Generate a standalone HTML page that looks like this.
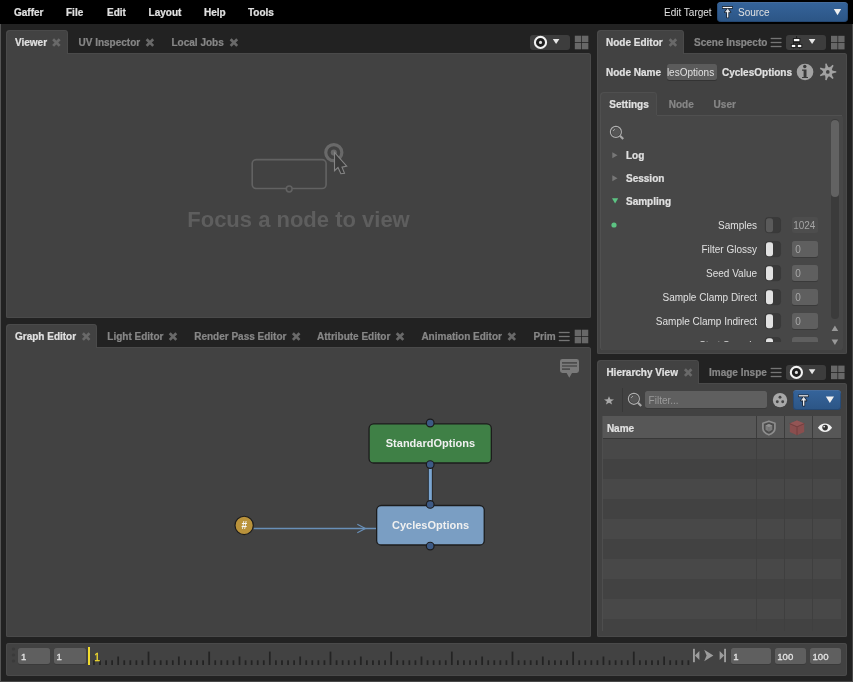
<!DOCTYPE html>
<html><head><meta charset="utf-8"><title>Gaffer</title>
<style>
html,body{margin:0;padding:0}
body{width:853px;height:682px;background:#222222;overflow:hidden;position:relative;font-family:"Liberation Sans",sans-serif;font-size:10px;line-height:12px;color:#e0e0e0}
.a{position:absolute;display:block}
.t{position:absolute;white-space:nowrap;line-height:12px;font-size:10px}
.b{font-weight:bold;-webkit-text-stroke:0.22px}
.f{color:#878787}
#w{position:absolute;left:0;top:0;width:853px;height:682px;will-change:transform}
</style></head><body><div id="w">
<div class="a" style="left:0px;top:24px;width:1px;height:658px;background:#555555;"></div>
<div class="a" style="left:852px;top:24px;width:1px;height:658px;background:#484848;"></div>
<div class="a" style="left:0px;top:681px;width:853px;height:1px;background:#484848;"></div>
<div class="a" style="left:0px;top:0px;width:853px;height:24px;background:#000000;"></div>
<div class="t b" style="left:14px;top:6.53px;">Gaffer</div>
<div class="t b" style="left:66px;top:6.53px;">File</div>
<div class="t b" style="left:107px;top:6.53px;">Edit</div>
<div class="t b" style="left:148.6px;top:6.53px;">Layout</div>
<div class="t b" style="left:204px;top:6.53px;">Help</div>
<div class="t b" style="left:248px;top:6.53px;">Tools</div>
<div class="t " style="left:664px;top:6.53px;">Edit Target</div>
<div class="a" style="left:717px;top:2px;width:131px;height:20px;border-radius:4px;background:linear-gradient(#35649b,#2c5585);box-shadow:inset 0 1px 0 rgba(120,160,210,.35),inset 0 0 0 1px rgba(20,40,70,.3)"></div>
<svg class="a" style="left:722px;top:6px" width="13" height="14" viewBox="0 0 13 14"><g stroke="#18222f" stroke-width="1.6" stroke-linejoin="round" fill="#18222f"><path d="M0.7 0.9H10.2V2.1H0.7Z"/><path d="M5.7 2.4L8.5 6.3H2.9Z"/><path d="M5.05 5H6.35V11.5H5.05Z"/></g><g fill="#d4dae2"><path d="M5.7 2.4L8.5 6.3H2.9Z"/></g><g fill="#f6f7f9"><path d="M0.7 0.9H10.2V2.1H0.7Z"/><path d="M5.05 5H6.35V11.5H5.05Z"/></g></svg>
<div class="t " style="left:738px;top:6.53px;">Source</div>
<svg class="a" style="left:833px;top:9px" width="10" height="8" viewBox="0 0 10 8"><g transform="translate(0.8,0)"><path d="M0 0H7.4L3.7 6.2Z" fill="#f0f0f0"/></g></svg>
<div class="a" style="left:6px;top:53px;width:585px;height:265px;background:#424242;border-radius:0 3px 2.5px 2.5px;box-shadow:inset 1px 0 0 #4a4a4a,inset -1px 0 0 #4a4a4a,inset 0 -1px 0 #4a4a4a"></div>
<div class="a" style="left:68px;top:53px;width:521px;height:1px;background:#4a4a4a;"></div>
<div class="a" style="left:6px;top:30px;width:62px;height:24px;background:#424242;border-radius:4px 4px 0 0;box-shadow:inset 1px 1px 0 #4a4a4a,inset -1px 0 0 #4a4a4a"></div>
<div class="a" style="left:6px;top:347px;width:585px;height:290px;background:#424242;border-radius:0 3px 2.5px 2.5px;box-shadow:inset 1px 0 0 #4a4a4a,inset -1px 0 0 #4a4a4a,inset 0 -1px 0 #4a4a4a"></div>
<div class="a" style="left:97px;top:347px;width:492px;height:1px;background:#4a4a4a;"></div>
<div class="a" style="left:6px;top:324px;width:91px;height:24px;background:#424242;border-radius:4px 4px 0 0;box-shadow:inset 1px 1px 0 #4a4a4a,inset -1px 0 0 #4a4a4a"></div>
<div class="a" style="left:597px;top:53px;width:250px;height:301px;background:#424242;border-radius:0 3px 2.5px 2.5px;box-shadow:inset 1px 0 0 #4a4a4a,inset -1px 0 0 #4a4a4a,inset 0 -1px 0 #4a4a4a"></div>
<div class="a" style="left:684px;top:53px;width:161px;height:1px;background:#4a4a4a;"></div>
<div class="a" style="left:597px;top:30px;width:87px;height:24px;background:#424242;border-radius:4px 4px 0 0;box-shadow:inset 1px 1px 0 #4a4a4a,inset -1px 0 0 #4a4a4a"></div>
<div class="a" style="left:597px;top:383px;width:250px;height:254px;background:#424242;border-radius:0 3px 2.5px 2.5px;box-shadow:inset 1px 0 0 #4a4a4a,inset -1px 0 0 #4a4a4a,inset 0 -1px 0 #4a4a4a"></div>
<div class="a" style="left:699px;top:383px;width:146px;height:1px;background:#4a4a4a;"></div>
<div class="a" style="left:597px;top:360px;width:102px;height:24px;background:#424242;border-radius:4px 4px 0 0;box-shadow:inset 1px 1px 0 #4a4a4a,inset -1px 0 0 #4a4a4a"></div>
<div class="a" style="left:6px;top:643px;width:841px;height:33px;background:#424242;border-radius:3px;box-shadow:inset 0 0 0 1px #4a4a4a"></div>
<div class="t b" style="left:15px;top:36.53px;">Viewer</div>
<svg class="a" style="left:52px;top:38px" width="10" height="11" viewBox="0 0 10 11"><g transform="translate(0,0.2)"><path d="M1.1 1.1L7.7 7.7M7.7 1.1L1.1 7.7" stroke="#696969" stroke-width="2.7" fill="none"/></g></svg>
<div class="t b f" style="left:78.5px;top:36.53px;">UV Inspector</div>
<svg class="a" style="left:145px;top:38px" width="11" height="11" viewBox="0 0 11 11"><g transform="translate(0.5,0.2)"><path d="M1.1 1.1L7.7 7.7M7.7 1.1L1.1 7.7" stroke="#696969" stroke-width="2.7" fill="none"/></g></svg>
<div class="t b f" style="left:171.5px;top:36.53px;">Local Jobs</div>
<svg class="a" style="left:229px;top:38px" width="11" height="11" viewBox="0 0 11 11"><g transform="translate(0.5,0.2)"><path d="M1.1 1.1L7.7 7.7M7.7 1.1L1.1 7.7" stroke="#696969" stroke-width="2.7" fill="none"/></g></svg>
<div class="a" style="left:530px;top:35px;width:40px;height:15px;background:#3d3d3d;border-radius:3px"></div>
<svg class="a" style="left:532px;top:34px" width="18" height="18" viewBox="0 0 18 18"><g transform="translate(0.5,0.4)"><circle cx="8" cy="8" r="5.55" fill="#1e1e1e" stroke="#f2f2f2" stroke-width="2.1"/><circle cx="8" cy="8" r="1.55" fill="#e0e0e0"/></g></svg>
<svg class="a" style="left:552px;top:39px" width="9" height="6" viewBox="0 0 9 6"><g transform="translate(0.8,0)"><path d="M0 0H6.6L3.3 5Z" fill="#e6e6e6"/></g></svg>
<svg class="a" style="left:574px;top:35px" width="16" height="16" viewBox="0 0 16 16"><g transform="translate(0.8,0.7)"><rect x="0" y="0" width="6.45" height="6.45" fill="#676767"/><rect x="7.2" y="0" width="6.35" height="6.45" fill="#676767"/><rect x="0" y="7.2" width="6.45" height="6.4" fill="#676767"/><rect x="7.2" y="7.2" width="6.35" height="6.4" fill="#676767"/></g></svg>
<svg class="a" style="left:240px;top:135px" width="121" height="66" viewBox="0 0 121 66"><rect x="12.2" y="24.6" width="73.9" height="28.9" rx="4" fill="none" stroke="#626262" stroke-width="1.65"/><circle cx="49.2" cy="54" r="2.9" fill="#424242" stroke="#626262" stroke-width="1.5"/><circle cx="93.8" cy="17.6" r="8.05" fill="none" stroke="#696969" stroke-width="3.2"/><circle cx="93.8" cy="17.6" r="3.05" fill="#696969"/><path d="M94.5 17.4V35.7L98 32.5L100.9 38.7L104.5 38.3L102 32.2L106.7 31.1Z" fill="#3a3a3a" stroke="#858585" stroke-width="1.1" stroke-linejoin="miter"/></svg>
<svg class="a" style="left:183px;top:205px" width="232" height="31" viewBox="0 0 232 31"><text x="115.5" y="21.8" font-family="'Liberation Sans',sans-serif" font-weight="bold" font-size="22" text-anchor="middle" fill="#5e5e5e">Focus a node to view</text></svg>
<div class="t b" style="left:15px;top:330.53px;">Graph Editor</div>
<svg class="a" style="left:81px;top:332px" width="11" height="11" viewBox="0 0 11 11"><g transform="translate(0.8,0.2)"><path d="M1.1 1.1L7.7 7.7M7.7 1.1L1.1 7.7" stroke="#696969" stroke-width="2.7" fill="none"/></g></svg>
<div class="t b f" style="left:107.3px;top:330.53px;">Light Editor</div>
<svg class="a" style="left:168px;top:332px" width="11" height="11" viewBox="0 0 11 11"><g transform="translate(0.6,0.2)"><path d="M1.1 1.1L7.7 7.7M7.7 1.1L1.1 7.7" stroke="#696969" stroke-width="2.7" fill="none"/></g></svg>
<div class="t b f" style="left:194.2px;top:330.53px;">Render Pass Editor</div>
<svg class="a" style="left:291px;top:332px" width="11" height="11" viewBox="0 0 11 11"><g transform="translate(0.8,0.2)"><path d="M1.1 1.1L7.7 7.7M7.7 1.1L1.1 7.7" stroke="#696969" stroke-width="2.7" fill="none"/></g></svg>
<div class="t b f" style="left:317px;top:330.53px;">Attribute Editor</div>
<svg class="a" style="left:395px;top:332px" width="11" height="11" viewBox="0 0 11 11"><g transform="translate(0.6,0.2)"><path d="M1.1 1.1L7.7 7.7M7.7 1.1L1.1 7.7" stroke="#696969" stroke-width="2.7" fill="none"/></g></svg>
<div class="t b f" style="left:421.4px;top:330.53px;">Animation Editor</div>
<svg class="a" style="left:507px;top:332px" width="11" height="11" viewBox="0 0 11 11"><g transform="translate(0.4,0.2)"><path d="M1.1 1.1L7.7 7.7M7.7 1.1L1.1 7.7" stroke="#696969" stroke-width="2.7" fill="none"/></g></svg>
<div class="t b f" style="left:533.4px;top:330.53px;">Prim</div>
<svg class="a" style="left:557px;top:330px" width="16" height="14" viewBox="0 0 16 14"><g transform="translate(0.2,0)"><path d="M1.2 2.5H12.8M1.2 6.5H12.8M1.2 10.5H12.8" stroke="#181818" stroke-width="2.9" fill="none"/><path d="M1.5 2.5H12.5M1.5 6.5H12.5M1.5 10.5H12.5" stroke="#757575" stroke-width="1.35" fill="none"/></g></svg>
<svg class="a" style="left:574px;top:329px" width="16" height="16" viewBox="0 0 16 16"><g transform="translate(0.7,0.7)"><rect x="0" y="0" width="6.45" height="6.45" fill="#676767"/><rect x="7.2" y="0" width="6.35" height="6.45" fill="#676767"/><rect x="0" y="7.2" width="6.45" height="6.4" fill="#676767"/><rect x="7.2" y="7.2" width="6.35" height="6.4" fill="#676767"/></g></svg>
<svg class="a" style="left:559px;top:358px" width="23" height="23" viewBox="0 0 23 23"><path d="M3.4 1H17.6Q20 1 20 3.4V12.6Q20 15 17.6 15H13L10.3 19.8L7.6 15H3.4Q1 15 1 12.6V3.4Q1 1 3.4 1Z" fill="#7a7a7a"/><path d="M3 4.9H18M3 8H18M3 11.1H11" stroke="#4c4c4c" stroke-width="1.7"/></svg>
<svg class="a" style="left:360px;top:410px" width="141" height="151" viewBox="0 0 141 151"><rect x="67.95" y="55" width="4.7" height="38" fill="#1e1e1e"/><rect x="68.75" y="55" width="3.1" height="38" fill="#7ba6d2"/><rect x="9.05" y="13.9" width="122.3" height="39.1" rx="4.6" fill="#3f8046" stroke="#1c1c1c" stroke-width="1.3"/><rect x="16.65" y="95.5" width="107.6" height="39.5" rx="4.6" fill="#7a9ec3" stroke="#1c1c1c" stroke-width="1.3"/><circle cx="70.2" cy="13.0" r="3.85" fill="#3d5a85" stroke="#1c1c1c" stroke-width="1.2"/><circle cx="70.2" cy="54.60000000000002" r="3.85" fill="#3d5a85" stroke="#1c1c1c" stroke-width="1.2"/><circle cx="70.2" cy="94.39999999999998" r="3.85" fill="#3d5a85" stroke="#1c1c1c" stroke-width="1.2"/><circle cx="70.2" cy="136.10000000000002" r="3.85" fill="#3d5a85" stroke="#1c1c1c" stroke-width="1.2"/></svg>
<svg class="a" style="left:250px;top:520px" width="131" height="17" viewBox="0 0 131 17"><path d="M3.5 8.5H126" stroke="#6990b8" stroke-width="1.3" fill="none"/><path d="M107.3 4.2L115.4 8.5L107.3 12.8" stroke="#6990b8" stroke-width="1.2" fill="none"/></svg>
<svg class="a" style="left:380px;top:436px" width="101" height="17" viewBox="0 0 101 17"><text x="50.4" y="11.4" font-family="'Liberation Sans',sans-serif" font-weight="bold" font-size="11" text-anchor="middle" fill="#f0f0f0">StandardOptions</text></svg>
<svg class="a" style="left:388px;top:517px" width="91" height="17" viewBox="0 0 91 17"><text x="42.5" y="11.8" font-family="'Liberation Sans',sans-serif" font-weight="bold" font-size="11" text-anchor="middle" fill="#f0f0f0">CyclesOptions</text></svg>
<svg class="a" style="left:233px;top:514px" width="24" height="24" viewBox="0 0 24 24"><circle cx="11.15" cy="11.4" r="9.15" fill="#b9923b" stroke="#1c1c1c" stroke-width="1.2"/></svg>
<svg class="a" style="left:239px;top:519px" width="13" height="13" viewBox="0 0 13 13"><text x="5.2" y="9.9" font-family="'Liberation Sans',sans-serif" font-weight="bold" font-size="10" text-anchor="middle" fill="#f6f6f6">#</text></svg>
<div class="t b" style="left:606px;top:36.53px;">Node Editor</div>
<svg class="a" style="left:668px;top:38px" width="11" height="11" viewBox="0 0 11 11"><g transform="translate(0.5,0.2)"><path d="M1.1 1.1L7.7 7.7M7.7 1.1L1.1 7.7" stroke="#696969" stroke-width="2.7" fill="none"/></g></svg>
<div class="t b f" style="left:694px;top:36.53px;">Scene Inspecto</div>
<svg class="a" style="left:769px;top:36px" width="16" height="14" viewBox="0 0 16 14"><g transform="translate(0.1,0)"><path d="M1.2 2.5H12.8M1.2 6.5H12.8M1.2 10.5H12.8" stroke="#181818" stroke-width="2.9" fill="none"/><path d="M1.5 2.5H12.5M1.5 6.5H12.5M1.5 10.5H12.5" stroke="#757575" stroke-width="1.35" fill="none"/></g></svg>
<div class="a" style="left:786px;top:35px;width:40px;height:15px;background:#3d3d3d;border-radius:3px"></div>
<svg class="a" style="left:790px;top:35px" width="15" height="16" viewBox="0 0 15 16"><g transform="translate(0,0.5)"><path d="M6.6 0.6V3M3.5 9V7.2H9.6V9M6.6 6V7.2M3.5 12V13M9.6 12V13" fill="none" stroke="#1a1a1a" stroke-width="1"/><g fill="#f6f6f6" stroke="#1a1a1a" stroke-width="0.9"><rect x="3.4" y="3" width="6.5" height="3.2"/><rect x="1.3" y="8.9" width="4.5" height="3.1"/><rect x="7.3" y="8.9" width="4.5" height="3.1"/></g></g></svg>
<svg class="a" style="left:808px;top:39px" width="9" height="6" viewBox="0 0 9 6"><g transform="translate(0.8,0)"><path d="M0 0H6.6L3.3 5Z" fill="#e6e6e6"/></g></svg>
<svg class="a" style="left:831px;top:35px" width="15" height="16" viewBox="0 0 15 16"><g transform="translate(0,0.8)"><rect x="0" y="0" width="6.45" height="6.45" fill="#676767"/><rect x="7.2" y="0" width="6.35" height="6.45" fill="#676767"/><rect x="0" y="7.2" width="6.45" height="6.4" fill="#676767"/><rect x="7.2" y="7.2" width="6.35" height="6.4" fill="#676767"/></g></svg>
<div class="t b" style="left:606px;top:66.53px;">Node Name</div>
<div class="a" style="left:666.6px;top:64px;width:50.3px;height:16px;background:#5b5b5b;border-radius:2.5px;box-shadow:0 1px 0 #333"></div>
<div class="t " style="left:666.9px;top:66.53px;color:#e0e0e0">lesOptions</div>
<div class="t b" style="left:722px;top:66.53px;">CyclesOptions</div>
<svg class="a" style="left:796px;top:63px" width="19" height="19" viewBox="0 0 19 19"><circle cx="9.05" cy="8.97" r="8.3" fill="#a2a2a2"/><circle cx="8.8" cy="3.45" r="1.7" fill="#3a3a3a"/><path d="M6 6.4H10.5V13.9H12V15H6V13.9H7.6V7.7H6Z" fill="#3a3a3a"/></svg>
<svg class="a" style="left:818px;top:62px" width="20" height="20" viewBox="0 0 20 20"><g transform="translate(0.8,0.9)"><polygon points="13.14,10.75 15.22,10.00 17.47,9.72 17.47,8.28 15.22,8.00 13.14,7.25 12.95,6.85 13.66,4.76 14.84,2.83 13.72,1.93 12.09,3.51 10.21,4.67 9.79,4.57 8.59,2.71 7.82,0.58 6.41,0.90 6.64,3.16 6.37,5.35 6.03,5.62 3.83,5.40 1.68,4.68 1.06,5.98 2.96,7.21 4.51,8.78 4.51,9.22 2.96,10.79 1.06,12.02 1.68,13.32 3.83,12.60 6.03,12.38 6.37,12.65 6.64,14.84 6.41,17.10 7.82,17.42 8.59,15.29 9.79,13.43 10.21,13.33 12.09,14.49 13.72,16.07 14.84,15.17 13.66,13.24 12.95,11.15" fill="#a2a2a2"/><circle cx="9" cy="9" r="4.5" fill="#a2a2a2"/><circle cx="9" cy="9" r="1.85" fill="#424242"/></g></svg>
<div class="a" style="left:600px;top:92px;width:57px;height:24px;background:#474747;border-radius:4px 4px 0 0;box-shadow:inset 1px 1px 0 #4f4f4f, inset -1px 0 0 #4e4e4e"></div>
<div class="a" style="left:600px;top:115px;width:243px;height:235px;background:#474747;border-radius:0 3px 3px 3px;box-shadow:inset 1px 0 0 #505050"></div>
<div class="a" style="left:657px;top:115px;width:185px;height:1px;background:#505050;"></div>
<div class="t b" style="left:609.3px;top:98.53px;">Settings</div>
<div class="t b f" style="left:668.7px;top:98.53px;">Node</div>
<div class="t b f" style="left:713.6px;top:98.53px;">User</div>
<svg class="a" style="left:609px;top:125px" width="18" height="18" viewBox="0 0 18 18"><g transform="translate(0.5,0.7)"><circle cx="6.4" cy="6.2" r="5.5" fill="#3a3a3a" stroke="#b0b0b0" stroke-width="1.15"/><circle cx="6.4" cy="6.2" r="4.3" fill="#555555"/><path d="M10.5 10.1L13.7 13.4" stroke="#a8a8a8" stroke-width="2.2"/><path d="M3.7 5.2Q4.3 4.2 5.3 3.7" stroke="#b8b8b8" stroke-width="0.9" fill="none"/></g></svg>
<svg class="a" style="left:612px;top:151px" width="7" height="9" viewBox="0 0 7 9"><g transform="translate(0,0.9)"><path d="M0.3 0.3L5.5 3.3L0.3 6.3Z" fill="#777777"/></g></svg>
<div class="t b" style="left:626px;top:149.53px;">Log</div>
<svg class="a" style="left:612px;top:174px" width="7" height="9" viewBox="0 0 7 9"><g transform="translate(0,0.9)"><path d="M0.3 0.3L5.5 3.3L0.3 6.3Z" fill="#777777"/></g></svg>
<div class="t b" style="left:626px;top:172.53px;">Session</div>
<svg class="a" style="left:611px;top:198px" width="9" height="7" viewBox="0 0 9 7"><g transform="translate(0.8,0)"><path d="M0.2 0.2H6.4L3.3 5.6Z" fill="#5cc483"/></g></svg>
<div class="t b" style="left:626px;top:195.53px;">Sampling</div>
<svg class="a" style="left:611px;top:222px" width="7" height="7" viewBox="0 0 7 7"><circle cx="3" cy="3" r="2.6" fill="#5cc483"/></svg>
<div class="a" style="left:601px;top:116px;width:229px;height:226px;overflow:hidden">
<div class="t" style="right:73px;top:103.83px">Samples</div>
<svg class="a" style="left:163px;top:100px" width="18" height="18" viewBox="0 0 18 18"><rect x="1.3" y="1.5" width="15.3" height="15.2" rx="3" fill="#3a3a3a" stroke="#353535" stroke-width="0.6"/><rect x="2" y="2.25" width="7" height="13.9" rx="2.6" fill="#5a5a5a"/></svg>
<div class="a" style="left:191.29999999999995px;top:100.69999999999999px;width:26px;height:16.4px;background:#4d4d4d;border-radius:2.5px;"></div>
<svg class="a" style="left:192px;top:101px" width="26" height="16"><text x="0.2" y="11.95" font-family="'Liberation Sans',sans-serif" font-size="10" fill="#a4a4a4">1024</text></svg>
<div class="t" style="right:73px;top:127.83px">Filter Glossy</div>
<svg class="a" style="left:163px;top:124px" width="18" height="18" viewBox="0 0 18 18"><rect x="1.3" y="1.5" width="15.3" height="15.2" rx="3" fill="#3a3a3a" stroke="#353535" stroke-width="0.6"/><rect x="2" y="2.25" width="7" height="13.9" rx="2.6" fill="#e2e2e2"/></svg>
<div class="a" style="left:191.29999999999995px;top:124.69999999999999px;width:26px;height:16.4px;background:#5f5f5f;border-radius:2.5px;box-shadow:0 1px 0 #3a3a3a"></div>
<div class="t" style="left:194.20000000000005px;top:127.83px;color:#a6a6a6">0</div>
<div class="t" style="right:73px;top:151.83px">Seed Value</div>
<svg class="a" style="left:163px;top:148px" width="18" height="18" viewBox="0 0 18 18"><rect x="1.3" y="1.5" width="15.3" height="15.2" rx="3" fill="#3a3a3a" stroke="#353535" stroke-width="0.6"/><rect x="2" y="2.25" width="7" height="13.9" rx="2.6" fill="#e2e2e2"/></svg>
<div class="a" style="left:191.29999999999995px;top:148.7px;width:26px;height:16.4px;background:#5f5f5f;border-radius:2.5px;box-shadow:0 1px 0 #3a3a3a"></div>
<div class="t" style="left:194.20000000000005px;top:151.83px;color:#a6a6a6">0</div>
<div class="t" style="right:73px;top:175.83px">Sample Clamp Direct</div>
<svg class="a" style="left:163px;top:172px" width="18" height="18" viewBox="0 0 18 18"><rect x="1.3" y="1.5" width="15.3" height="15.2" rx="3" fill="#3a3a3a" stroke="#353535" stroke-width="0.6"/><rect x="2" y="2.25" width="7" height="13.9" rx="2.6" fill="#e2e2e2"/></svg>
<div class="a" style="left:191.29999999999995px;top:172.7px;width:26px;height:16.4px;background:#5f5f5f;border-radius:2.5px;box-shadow:0 1px 0 #3a3a3a"></div>
<div class="t" style="left:194.20000000000005px;top:175.83px;color:#a6a6a6">0</div>
<div class="t" style="right:73px;top:199.83px">Sample Clamp Indirect</div>
<svg class="a" style="left:163px;top:196px" width="18" height="18" viewBox="0 0 18 18"><rect x="1.3" y="1.5" width="15.3" height="15.2" rx="3" fill="#3a3a3a" stroke="#353535" stroke-width="0.6"/><rect x="2" y="2.25" width="7" height="13.9" rx="2.6" fill="#e2e2e2"/></svg>
<div class="a" style="left:191.29999999999995px;top:196.7px;width:26px;height:16.4px;background:#5f5f5f;border-radius:2.5px;box-shadow:0 1px 0 #3a3a3a"></div>
<div class="t" style="left:194.20000000000005px;top:199.83px;color:#a6a6a6">0</div>
<div class="t" style="right:73px;top:223.83px">Start Sample</div>
<svg class="a" style="left:163px;top:220px" width="18" height="18" viewBox="0 0 18 18"><rect x="1.3" y="1.5" width="15.3" height="15.2" rx="3" fill="#3a3a3a" stroke="#353535" stroke-width="0.6"/><rect x="2" y="2.25" width="7" height="13.9" rx="2.6" fill="#e2e2e2"/></svg>
<div class="a" style="left:191.29999999999995px;top:220.7px;width:26px;height:16.4px;background:#5f5f5f;border-radius:2.5px;box-shadow:0 1px 0 #3a3a3a"></div>
<div class="t" style="left:194.20000000000005px;top:223.83px;color:#a6a6a6"></div>
</div>
<div class="a" style="left:831px;top:119px;width:8px;height:200px;background:#3b3b3b;border-radius:4px"></div>
<div class="a" style="left:831px;top:120px;width:8px;height:77px;background:#626262;border-radius:4px"></div>
<svg class="a" style="left:831px;top:325px" width="9" height="8" viewBox="0 0 9 8"><g transform="translate(0.6,0.6)"><path d="M0 5.4H6.6L3.3 0Z" fill="#999"/></g></svg>
<svg class="a" style="left:831px;top:339px" width="9" height="8" viewBox="0 0 9 8"><g transform="translate(0.6,0.6)"><path d="M0 0H6.6L3.3 5.4Z" fill="#999"/></g></svg>
<div class="t b" style="left:606.4px;top:366.53px;">Hierarchy View</div>
<svg class="a" style="left:683px;top:368px" width="11" height="11" viewBox="0 0 11 11"><g transform="translate(0.8,0.2)"><path d="M1.1 1.1L7.7 7.7M7.7 1.1L1.1 7.7" stroke="#696969" stroke-width="2.7" fill="none"/></g></svg>
<div class="t b f" style="left:709px;top:366.53px;">Image Inspe</div>
<svg class="a" style="left:769px;top:366px" width="16" height="14" viewBox="0 0 16 14"><g transform="translate(0.1,0)"><path d="M1.2 2.5H12.8M1.2 6.5H12.8M1.2 10.5H12.8" stroke="#181818" stroke-width="2.9" fill="none"/><path d="M1.5 2.5H12.5M1.5 6.5H12.5M1.5 10.5H12.5" stroke="#757575" stroke-width="1.35" fill="none"/></g></svg>
<div class="a" style="left:786px;top:365px;width:40px;height:15px;background:#3d3d3d;border-radius:3px"></div>
<svg class="a" style="left:788px;top:364px" width="18" height="18" viewBox="0 0 18 18"><g transform="translate(0.4,0.4)"><circle cx="8" cy="8" r="5.55" fill="#1e1e1e" stroke="#f2f2f2" stroke-width="2.1"/><circle cx="8" cy="8" r="1.55" fill="#e0e0e0"/></g></svg>
<svg class="a" style="left:808px;top:369px" width="9" height="7" viewBox="0 0 9 7"><g transform="translate(0.8,0.3)"><path d="M0 0H6.6L3.3 5Z" fill="#e6e6e6"/></g></svg>
<svg class="a" style="left:831px;top:365px" width="15" height="16" viewBox="0 0 15 16"><g transform="translate(0,0.6)"><rect x="0" y="0" width="6.45" height="6.45" fill="#676767"/><rect x="7.2" y="0" width="6.35" height="6.45" fill="#676767"/><rect x="0" y="7.2" width="6.45" height="6.4" fill="#676767"/><rect x="7.2" y="7.2" width="6.35" height="6.4" fill="#676767"/></g></svg>
<svg class="a" style="left:603px;top:396px" width="13" height="11" viewBox="0 0 13 11"><g transform="translate(0.7,0)"><polygon transform="scale(1,0.9)" points="5.3,0.3 6.6,3.7 10.3,3.8 7.4,6 8.4,9.5 5.3,7.5 2.2,9.5 3.2,6 0.3,3.8 4,3.7" fill="#a8a8a8"/></g></svg>
<div class="a" style="left:622px;top:388px;width:1px;height:24px;background:#383838;"></div>
<svg class="a" style="left:627px;top:392px" width="18" height="18" viewBox="0 0 18 18"><g transform="translate(0.5,0.6)"><circle cx="6.4" cy="6.2" r="5.5" fill="#3a3a3a" stroke="#b0b0b0" stroke-width="1.15"/><circle cx="6.4" cy="6.2" r="4.3" fill="#555555"/><path d="M10.5 10.1L13.7 13.4" stroke="#a8a8a8" stroke-width="2.2"/><path d="M3.7 5.2Q4.3 4.2 5.3 3.7" stroke="#b8b8b8" stroke-width="0.9" fill="none"/></g></svg>
<div class="a" style="left:645px;top:391.4px;width:122px;height:16.6px;background:#5f5f5f;border-radius:2.5px;box-shadow:0 1px 0 #3a3a3a"></div>
<div class="t " style="left:648.6px;top:394.53px;color:#9a9a9a">Filter...</div>
<svg class="a" style="left:772px;top:392px" width="17" height="17" viewBox="0 0 17 17"><circle cx="8" cy="8.1" r="7.2" fill="#a8a8a8"/><circle cx="8" cy="5.2" r="1.45" fill="#454545"/><circle cx="5.3" cy="9.7" r="1.45" fill="#454545"/><circle cx="10.7" cy="9.7" r="1.45" fill="#454545"/></svg>
<div class="a" style="left:793px;top:390px;width:48px;height:19.8px;border-radius:3.5px;background:linear-gradient(#35649b,#2c5585);box-shadow:inset 0 1px 0 rgba(120,160,210,.35),inset 0 0 0 1px rgba(20,40,70,.3)"></div>
<svg class="a" style="left:798px;top:394px" width="13" height="15" viewBox="0 0 13 15"><g transform="translate(0,0.3)"><g stroke="#18222f" stroke-width="1.6" stroke-linejoin="round" fill="#18222f"><path d="M0.7 0.9H10.2V2.1H0.7Z"/><path d="M5.7 2.4L8.5 6.3H2.9Z"/><path d="M5.05 5H6.35V11.5H5.05Z"/></g><g fill="#d4dae2"><path d="M5.7 2.4L8.5 6.3H2.9Z"/></g><g fill="#f6f7f9"><path d="M0.7 0.9H10.2V2.1H0.7Z"/><path d="M5.05 5H6.35V11.5H5.05Z"/></g></g></svg>
<svg class="a" style="left:825px;top:396px" width="10" height="8" viewBox="0 0 10 8"><g transform="translate(0.8,0.4)"><path d="M0 0H8.2L4.1 6.6Z" fill="#f0f0f0"/></g></svg>
<div class="a" style="left:602px;top:416px;width:239.4px;height:22px;background:#575757;"></div>
<div class="a" style="left:756.3px;top:416px;width:1px;height:22px;background:#3c3c3c;"></div>
<div class="a" style="left:784.2px;top:416px;width:1px;height:22px;background:#3c3c3c;"></div>
<div class="a" style="left:812.2px;top:416px;width:1px;height:22px;background:#3c3c3c;"></div>
<div class="a" style="left:602px;top:438px;width:239.4px;height:1px;background:#383838;"></div>
<div class="t b" style="left:606.9px;top:422.53px;">Name</div>
<div class="a" style="left:602px;top:439px;width:239.4px;height:20px;background:#484848;"></div>
<div class="a" style="left:602px;top:459px;width:239.4px;height:20px;background:#424242;"></div>
<div class="a" style="left:602px;top:479px;width:239.4px;height:20px;background:#484848;"></div>
<div class="a" style="left:602px;top:499px;width:239.4px;height:20px;background:#424242;"></div>
<div class="a" style="left:602px;top:519px;width:239.4px;height:20px;background:#484848;"></div>
<div class="a" style="left:602px;top:539px;width:239.4px;height:20px;background:#424242;"></div>
<div class="a" style="left:602px;top:559px;width:239.4px;height:20px;background:#484848;"></div>
<div class="a" style="left:602px;top:579px;width:239.4px;height:20px;background:#424242;"></div>
<div class="a" style="left:602px;top:599px;width:239.4px;height:20px;background:#484848;"></div>
<div class="a" style="left:602px;top:619px;width:239.4px;height:12px;background:#424242;"></div>
<div class="a" style="left:756.3px;top:439px;width:1px;height:192px;background:#3f3f3f;"></div>
<div class="a" style="left:784.2px;top:439px;width:1px;height:192px;background:#3f3f3f;"></div>
<div class="a" style="left:812.2px;top:439px;width:1px;height:192px;background:#3f3f3f;"></div>
<div class="a" style="left:602px;top:416px;width:1px;height:215px;background:#4e4e4e;"></div>
<svg class="a" style="left:761px;top:420px" width="17" height="18" viewBox="0 0 17 18"><g transform="translate(0.5,0.2)"><path d="M7.4 1L13.4 3V8.2Q13.4 12 7.4 14.6Q1.4 12 1.4 8.2V3Z" fill="#4c4c4c" stroke="#8e8e8e" stroke-width="1.7" stroke-linejoin="round"/><path d="M7.4 3.9L10.8 5.3V9.6L7.4 11.5L4 9.6V5.3Z" fill="#7c7c7c"/><path d="M7.4 3.9L10.8 5.3L7.4 6.8L4 5.3Z" fill="#929292"/><path d="M7.4 6.8V11.5" stroke="#666" stroke-width="0.6"/></g></svg>
<svg class="a" style="left:789px;top:420px" width="18" height="18" viewBox="0 0 18 18"><g transform="translate(0.6,0.3)"><path d="M7.4 0.3L14.6 3.3V11.6L7.4 14.9L0.2 11.6V3.3Z" fill="#8a4e4e"/><path d="M0.2 3.3L7.4 6.4L14.6 3.3M7.4 6.4V14.9" stroke="#6f3d3d" stroke-width="0.9" fill="none"/><path d="M7.4 0.3L14.6 3.3L7.4 6.4L0.2 3.3Z" fill="#935555"/><path d="M0.2 3.3L7.4 6.4L14.6 3.3" stroke="#6f3d3d" stroke-width="0.7" fill="none"/></g></svg>
<svg class="a" style="left:817px;top:423px" width="17" height="11" viewBox="0 0 17 11"><g transform="translate(0.7,0.4)"><path d="M0.2 4.3Q3.3 0.2 7.3 0.2Q11.3 0.2 14.4 4.3Q11.3 8.5 7.3 8.5Q3.3 8.5 0.2 4.3Z" fill="#f2f2f2"/><circle cx="7.4" cy="4.2" r="2.8" fill="#333"/><circle cx="6.5" cy="3.2" r="0.9" fill="#ddd"/></g></svg>
<svg class="a" style="left:11px;top:647px" width="6" height="5" viewBox="0 0 6 5"><g transform="translate(0.5,0)"><circle cx="2" cy="2" r="1.6" fill="#3a3a3a"/></g></svg>
<svg class="a" style="left:11px;top:653px" width="6" height="5" viewBox="0 0 6 5"><g transform="translate(0.5,0)"><circle cx="2" cy="2" r="1.6" fill="#3a3a3a"/></g></svg>
<svg class="a" style="left:11px;top:659px" width="6" height="5" viewBox="0 0 6 5"><g transform="translate(0.5,0)"><circle cx="2" cy="2" r="1.6" fill="#3a3a3a"/></g></svg>
<div class="a" style="left:18.3px;top:647.7px;width:32px;height:16.3px;background:#5f5f5f;border-radius:2.5px;box-shadow:0 1px 0 #3a3a3a"></div>
<svg class="a" style="left:20px;top:650px" width="10" height="14" viewBox="0 0 10 14"><g transform="translate(0.9,0.2)"><text x="0.2" y="9.6" font-family="'Liberation Sans',sans-serif" font-size="9.6" fill="#e4e4e4" stroke="#e4e4e4" stroke-width="0.3">1</text></g></svg>
<div class="a" style="left:53.6px;top:647.7px;width:32px;height:16.3px;background:#5f5f5f;border-radius:2.5px;box-shadow:0 1px 0 #3a3a3a"></div>
<svg class="a" style="left:56px;top:650px" width="9" height="14" viewBox="0 0 9 14"><g transform="translate(0.2,0.2)"><text x="0.2" y="9.6" font-family="'Liberation Sans',sans-serif" font-size="9.6" fill="#e4e4e4" stroke="#e4e4e4" stroke-width="0.3">1</text></g></svg>
<div class="a" style="left:88px;top:647px;width:2px;height:18px;background:#f2dc2e;"></div>
<svg class="a" style="left:80px;top:645px" width="621" height="23" viewBox="0 0 621 23"><g fill="#232323"><rect x="13.05" y="15.3" width="1.75" height="4.7"/><rect x="19.12" y="15.3" width="1.75" height="4.7"/><rect x="25.18" y="15.3" width="1.75" height="4.7"/><rect x="31.25" y="15.3" width="1.75" height="4.7"/><rect x="37.31" y="11.5" width="1.75" height="8.5"/><rect x="43.38" y="15.3" width="1.75" height="4.7"/><rect x="49.45" y="15.3" width="1.75" height="4.7"/><rect x="55.51" y="15.3" width="1.75" height="4.7"/><rect x="61.58" y="15.3" width="1.75" height="4.7"/><rect x="67.64" y="6.6" width="1.75" height="13.4"/><rect x="73.71" y="15.3" width="1.75" height="4.7"/><rect x="79.78" y="15.3" width="1.75" height="4.7"/><rect x="85.84" y="15.3" width="1.75" height="4.7"/><rect x="91.91" y="15.3" width="1.75" height="4.7"/><rect x="97.97" y="11.5" width="1.75" height="8.5"/><rect x="104.04" y="15.3" width="1.75" height="4.7"/><rect x="110.11" y="15.3" width="1.75" height="4.7"/><rect x="116.17" y="15.3" width="1.75" height="4.7"/><rect x="122.24" y="15.3" width="1.75" height="4.7"/><rect x="128.30" y="6.6" width="1.75" height="13.4"/><rect x="134.37" y="15.3" width="1.75" height="4.7"/><rect x="140.44" y="15.3" width="1.75" height="4.7"/><rect x="146.50" y="15.3" width="1.75" height="4.7"/><rect x="152.57" y="15.3" width="1.75" height="4.7"/><rect x="158.63" y="11.5" width="1.75" height="8.5"/><rect x="164.70" y="15.3" width="1.75" height="4.7"/><rect x="170.77" y="15.3" width="1.75" height="4.7"/><rect x="176.83" y="15.3" width="1.75" height="4.7"/><rect x="182.90" y="15.3" width="1.75" height="4.7"/><rect x="188.96" y="6.6" width="1.75" height="13.4"/><rect x="195.03" y="15.3" width="1.75" height="4.7"/><rect x="201.10" y="15.3" width="1.75" height="4.7"/><rect x="207.16" y="15.3" width="1.75" height="4.7"/><rect x="213.23" y="15.3" width="1.75" height="4.7"/><rect x="219.29" y="11.5" width="1.75" height="8.5"/><rect x="225.36" y="15.3" width="1.75" height="4.7"/><rect x="231.43" y="15.3" width="1.75" height="4.7"/><rect x="237.49" y="15.3" width="1.75" height="4.7"/><rect x="243.56" y="15.3" width="1.75" height="4.7"/><rect x="249.62" y="6.6" width="1.75" height="13.4"/><rect x="255.69" y="15.3" width="1.75" height="4.7"/><rect x="261.76" y="15.3" width="1.75" height="4.7"/><rect x="267.82" y="15.3" width="1.75" height="4.7"/><rect x="273.89" y="15.3" width="1.75" height="4.7"/><rect x="279.95" y="11.5" width="1.75" height="8.5"/><rect x="286.02" y="15.3" width="1.75" height="4.7"/><rect x="292.09" y="15.3" width="1.75" height="4.7"/><rect x="298.15" y="15.3" width="1.75" height="4.7"/><rect x="304.22" y="15.3" width="1.75" height="4.7"/><rect x="310.28" y="6.6" width="1.75" height="13.4"/><rect x="316.35" y="15.3" width="1.75" height="4.7"/><rect x="322.42" y="15.3" width="1.75" height="4.7"/><rect x="328.48" y="15.3" width="1.75" height="4.7"/><rect x="334.55" y="15.3" width="1.75" height="4.7"/><rect x="340.61" y="11.5" width="1.75" height="8.5"/><rect x="346.68" y="15.3" width="1.75" height="4.7"/><rect x="352.75" y="15.3" width="1.75" height="4.7"/><rect x="358.81" y="15.3" width="1.75" height="4.7"/><rect x="364.88" y="15.3" width="1.75" height="4.7"/><rect x="370.94" y="6.6" width="1.75" height="13.4"/><rect x="377.01" y="15.3" width="1.75" height="4.7"/><rect x="383.08" y="15.3" width="1.75" height="4.7"/><rect x="389.14" y="15.3" width="1.75" height="4.7"/><rect x="395.21" y="15.3" width="1.75" height="4.7"/><rect x="401.27" y="11.5" width="1.75" height="8.5"/><rect x="407.34" y="15.3" width="1.75" height="4.7"/><rect x="413.41" y="15.3" width="1.75" height="4.7"/><rect x="419.47" y="15.3" width="1.75" height="4.7"/><rect x="425.54" y="15.3" width="1.75" height="4.7"/><rect x="431.60" y="6.6" width="1.75" height="13.4"/><rect x="437.67" y="15.3" width="1.75" height="4.7"/><rect x="443.74" y="15.3" width="1.75" height="4.7"/><rect x="449.80" y="15.3" width="1.75" height="4.7"/><rect x="455.87" y="15.3" width="1.75" height="4.7"/><rect x="461.93" y="11.5" width="1.75" height="8.5"/><rect x="468.00" y="15.3" width="1.75" height="4.7"/><rect x="474.07" y="15.3" width="1.75" height="4.7"/><rect x="480.13" y="15.3" width="1.75" height="4.7"/><rect x="486.20" y="15.3" width="1.75" height="4.7"/><rect x="492.26" y="6.6" width="1.75" height="13.4"/><rect x="498.33" y="15.3" width="1.75" height="4.7"/><rect x="504.40" y="15.3" width="1.75" height="4.7"/><rect x="510.46" y="15.3" width="1.75" height="4.7"/><rect x="516.53" y="15.3" width="1.75" height="4.7"/><rect x="522.59" y="11.5" width="1.75" height="8.5"/><rect x="528.66" y="15.3" width="1.75" height="4.7"/><rect x="534.73" y="15.3" width="1.75" height="4.7"/><rect x="540.79" y="15.3" width="1.75" height="4.7"/><rect x="546.86" y="15.3" width="1.75" height="4.7"/><rect x="552.92" y="6.6" width="1.75" height="13.4"/><rect x="558.99" y="15.3" width="1.75" height="4.7"/><rect x="565.06" y="15.3" width="1.75" height="4.7"/><rect x="571.12" y="15.3" width="1.75" height="4.7"/><rect x="577.19" y="15.3" width="1.75" height="4.7"/><rect x="583.25" y="11.5" width="1.75" height="8.5"/><rect x="589.32" y="15.3" width="1.75" height="4.7"/><rect x="595.39" y="15.3" width="1.75" height="4.7"/><rect x="601.45" y="15.3" width="1.75" height="4.7"/><rect x="607.52" y="15.3" width="1.75" height="4.7"/></g></svg>
<svg class="a" style="left:94px;top:650px" width="9" height="15" viewBox="0 0 9 15"><g transform="translate(0.0,0.6)"><text x="0.2" y="10.4" font-family="'Liberation Sans',sans-serif" font-size="10.4" fill="#f2dc2e" stroke="#f2dc2e" stroke-width="0.3">1</text></g></svg>
<svg class="a" style="left:692px;top:648px" width="37" height="17" viewBox="0 0 37 17"><g fill="#9c9c9c"><rect x="1" y="0.8" width="1.9" height="13.4"/><path d="M2.9 7.5L7.4 3V12Z"/><path d="M12.2 1.7L21.4 7.5L12.2 13.3L14.6 7.5Z"/><path d="M27.6 3V12L32.1 7.5Z"/><rect x="32.1" y="0.8" width="1.9" height="13.4"/></g></svg>
<div class="a" style="left:730.5px;top:647.7px;width:40.5px;height:16.3px;background:#5f5f5f;border-radius:2.5px;box-shadow:0 1px 0 #3a3a3a"></div>
<svg class="a" style="left:733px;top:650px" width="9" height="14" viewBox="0 0 9 14"><g transform="translate(0.1,0.2)"><text x="0.2" y="9.6" font-family="'Liberation Sans',sans-serif" font-size="9.6" fill="#e4e4e4" stroke="#e4e4e4" stroke-width="0.3">1</text></g></svg>
<div class="a" style="left:774.5px;top:647.7px;width:31.8px;height:16.3px;background:#5f5f5f;border-radius:2.5px;box-shadow:0 1px 0 #3a3a3a"></div>
<svg class="a" style="left:777px;top:650px" width="19" height="14" viewBox="0 0 19 14"><g transform="translate(0.1,0.2)"><text x="0.2" y="9.6" font-family="'Liberation Sans',sans-serif" font-size="9.6" fill="#e4e4e4" stroke="#e4e4e4" stroke-width="0.3">100</text></g></svg>
<div class="a" style="left:809.7px;top:647.7px;width:31.6px;height:16.3px;background:#5f5f5f;border-radius:2.5px;box-shadow:0 1px 0 #3a3a3a"></div>
<svg class="a" style="left:812px;top:650px" width="19" height="14" viewBox="0 0 19 14"><g transform="translate(0.3,0.2)"><text x="0.2" y="9.6" font-family="'Liberation Sans',sans-serif" font-size="9.6" fill="#e4e4e4" stroke="#e4e4e4" stroke-width="0.3">100</text></g></svg>
</div></body></html>
